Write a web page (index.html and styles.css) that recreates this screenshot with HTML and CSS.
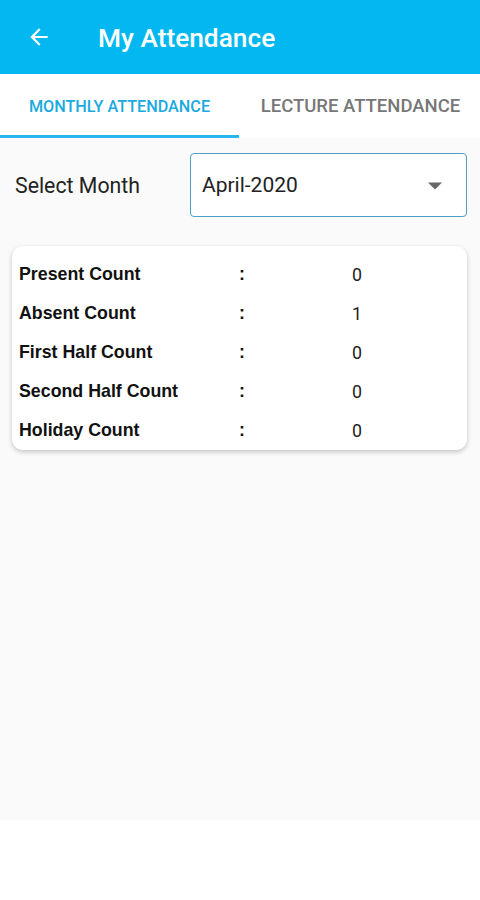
FILE: index.html
```html
<!DOCTYPE html>
<html>
<head>
<meta charset="utf-8">
<link rel="stylesheet" href="styles.css">
</head>
<body>
<div class="screen">
  <header class="appbar">
    <svg class="back" width="24" height="24" viewBox="0 0 24 24"><path d="M20 11H7.83l5.59-5.59L12 4l-8 8 8 8 1.41-1.41L7.83 13H20v-2z" fill="#fff"/></svg>
    <h1 class="title">My Attendance</h1>
  </header>
  <nav class="tabs">
    <div class="tab active">MONTHLY ATTENDANCE</div>
    <div class="tab">LECTURE ATTENDANCE</div>
  </nav>
  <main class="content">
    <div class="select-row">
      <span class="select-label">Select Month</span>
      <div class="dropdown">
        <span>April-2020</span>
        <svg class="caret" width="14" height="8" viewBox="0 0 10 5"><path d="M0 0l5 5 5-5z" fill="#666"/></svg>
      </div>
    </div>
    <section class="card">
      <div class="row"><span class="label">Present Count</span><span class="colon">:</span><span class="value">0</span></div>
      <div class="row"><span class="label">Absent Count</span><span class="colon">:</span><span class="value">1</span></div>
      <div class="row"><span class="label">First Half Count</span><span class="colon">:</span><span class="value">0</span></div>
      <div class="row"><span class="label">Second Half Count</span><span class="colon">:</span><span class="value">0</span></div>
      <div class="row"><span class="label">Holiday Count</span><span class="colon">:</span><span class="value">0</span></div>
    </section>
  </main>
</div>
</body>
</html>
```
FILE: styles.css
```css
* { box-sizing: border-box; }
html, body { margin: 0; padding: 0; background: #fff; }
body { font-family: Roboto, "Liberation Sans", sans-serif; }
.screen { width: 480px; height: 900px; display: flex; flex-direction: column; }
.appbar {
  height: 74px; background: #03b8f1; display: flex; align-items: center;
  padding-left: 26px;
}
.back { width: 26px; height: 26px; }
.title {
  margin: 0 0 0 46px; color: #fff; font-size: 26.3px; font-weight: 500;
  padding-top: 2px;
}
.tabs { height: 64px; background: #fff; display: flex; }
.tab {
  flex: 1; display: flex; align-items: center; justify-content: center;
  font-size: 18.5px; font-weight: 500; color: #777;
  border-bottom: 3px solid transparent; padding-top: 3px;
}
.tab:last-child { padding-left: 2px; }
.tab.active { color: #1aa9e0; border-bottom-color: #29b6ee; font-size: 16.2px; }
.content { height: 682px; background: #fafafa; padding: 15px 13px 0 12px; }
.select-row { display: flex; align-items: center; height: 64px; }
.select-label { width: 178px; padding-left: 3px; font-size: 21.3px; color: #222; }
.dropdown {
  flex: 1; height: 64px; border: 1.5px solid #4d9fc4; border-radius: 4px; background: #fff;
  display: flex; align-items: center; justify-content: space-between;
  padding: 0 24px 0 11px; font-size: 21px; color: #222;
}
.caret { margin-top: 2px; }
.card {
  margin-top: 29px; background: #fff; border-radius: 11px;
  box-shadow: 0 2px 5px rgba(0,0,0,0.22);
  padding: 9px 7px 0 7px;
}
.row { display: flex; align-items: center; height: 39px; font-size: 17.8px; color: #111; }
.label { width: 220px; font-weight: 700; font-family: "Liberation Sans", Arial, sans-serif; }
.colon { width: 113px; font-weight: 700; font-family: "Liberation Sans", Arial, sans-serif; }
.value { color: #222; }
```
